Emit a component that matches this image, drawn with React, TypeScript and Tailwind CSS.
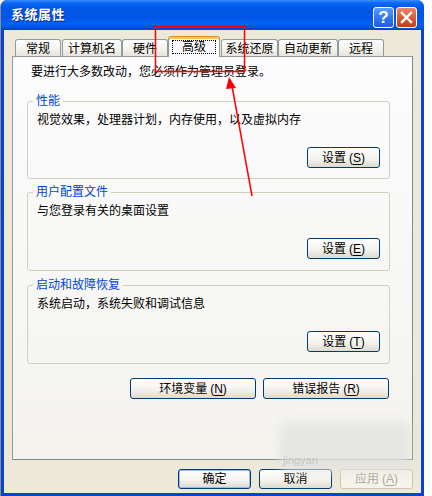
import React from "react";
import clsx from "clsx";

// Windows XP "系统属性" dialog, 高级 tab

const tabs = [
  { label: "常规", cls: "ml-[11px] w-[46px]" },
  { label: "计算机名", cls: "ml-[1px] w-[60px]" },
  { label: "硬件", cls: "ml-0 w-[46px]" },
  { label: "高级", cls: "ml-0 w-[52px]", active: true },
  { label: "系统还原", cls: "ml-[1px] w-[57px]" },
  { label: "自动更新", cls: "ml-0 w-[60px]" },
  { label: "远程", cls: "ml-0 w-[46px]" },
];

const Key = ({ k }: { k: string }) => (
  <span className="ml-[3px]">
    (<span className="underline underline-offset-[2px]">{k}</span>)
  </span>
);

function XpButton({
  label,
  k,
  className,
  primary,
  disabled,
}: {
  label: string;
  k?: string;
  className?: string;
  primary?: boolean;
  disabled?: boolean;
}) {
  return (
    <button
      className={clsx(
        "flex items-center justify-center rounded-[3px] border text-[12px] leading-none",
        disabled
          ? "border-[#c9c7ba] bg-[#f5f4ea] text-[#aca899]"
          : "border-[#003c74] bg-[linear-gradient(180deg,#ffffff_0%,#f4f3ee_55%,#dedbce_100%)] text-black",
        primary && "shadow-[inset_0_0_0_1px_#9fb8ee]",
        className
      )}
    >
      {label}
      {k && <Key k={k} />}
    </button>
  );
}

function Group({
  title,
  text,
  k,
  className,
}: {
  title: string;
  text: string;
  k: string;
  className: string;
}) {
  return (
    <fieldset
      className={clsx(
        "w-[363px] rounded-[3px] border border-[#d0d0bf] px-[9px]",
        className
      )}
    >
      <legend className="ml-[-4px] px-[3px] text-[12px] leading-[14px] text-[#0046d5]">
        {title}
      </legend>
      <p className="mt-[5px] text-[12px] leading-[14px]">{text}</p>
      <div className="mt-[20px] flex justify-end">
        <XpButton label="设置" k={k} className="h-[21px] w-[73px]" />
      </div>
    </fieldset>
  );
}

export default function App() {
  return (
    <div className="relative h-[496px] w-[432px] overflow-hidden bg-white font-['Liberation_Sans','Noto_Sans_CJK_SC',sans-serif] text-black">
      <div className="flex h-[496px] w-[424px] flex-col rounded-t-[7px] border-l border-l-[#8c8c8c] bg-[#0842d6]">
        {/* title bar */}
        <div className="flex h-[30px] shrink-0 items-start rounded-t-[7px] bg-[linear-gradient(180deg,#3a8cff_0%,#0a6af6_10%,#0058e6_25%,#0055e6_60%,#0462f5_80%,#0050d6_94%,#0040b0_100%)] pr-[7px]">
          <span className="ml-[10px] mt-[7px] text-[13px] font-bold leading-[16px] tracking-[0.5px] text-white [text-shadow:1px_1px_0_#0a2a8a]">
            系统属性
          </span>
          <div className="ml-auto mt-[7px] flex gap-[2px]">
            <div className="flex h-[21px] w-[21px] items-center justify-center rounded-[3px] border border-white bg-[linear-gradient(180deg,#5b9cff_0%,#2e6ff0_60%,#235fd8_100%)] text-[17px] font-bold leading-none text-white">
              ?
            </div>
            <div className="flex h-[21px] w-[21px] items-center justify-center rounded-[3px] border border-white bg-[linear-gradient(180deg,#e8866a_0%,#d65a36_55%,#c2401c_100%)]">
              <svg width="13" height="13" viewBox="0 0 13 13">
                <path d="M2 2 L11 11 M11 2 L2 11" stroke="white" strokeWidth="2.4" strokeLinecap="square" />
              </svg>
            </div>
          </div>
        </div>

        {/* client area */}
        <div className="mx-[3px] mb-[3px] flex flex-1 flex-col bg-[#ece9d8] pt-[6px]">
          <div className="flex h-[20px] items-end">
            {tabs.map((t) =>
              t.active ? (
                <div
                  key={t.label}
                  className={clsx(
                    "relative z-10 -mb-px h-[21px] rounded-t-[3px] border border-b-0 border-[#919b9c] border-t-[#e68b2c] bg-[#fcfcfe] px-[3px] pt-[3px] shadow-[inset_0_2px_0_#ffc83c]",
                    t.cls
                  )}
                >
                  <div className="flex h-[14px] items-center justify-center border border-dotted border-black text-[12px] leading-none">
                    {t.label}
                  </div>
                </div>
              ) : (
                <div
                  key={t.label}
                  className={clsx(
                    "flex h-[17px] items-center justify-center rounded-t-[3px] border border-b-0 border-[#919b9c] bg-[linear-gradient(180deg,#ffffff_0%,#f3f2ec_60%,#e6e4dc_100%)] pt-[2px] text-[12px] leading-none",
                    t.cls
                  )}
                >
                  {t.label}
                </div>
              )
            )}
          </div>

          <div className="mx-[8px] h-[404px] border border-[#919b9c] border-b-[#7f8a8b] border-r-[#7f8a8b] bg-[linear-gradient(180deg,#fcfcfe_0%,#f4f3ee_100%)] pl-[14px] pt-[8px]">
            <p className="ml-[4px] text-[12px] leading-[14px]">
              要进行大多数改动，您必须作为管理员登录。
            </p>
            <Group
              title="性能"
              text="视觉效果，处理器计划，内存使用，以及虚拟内存"
              k="S"
              className="mt-[15px] h-[85px]"
            />
            <Group
              title="用户配置文件"
              text="与您登录有关的桌面设置"
              k="E"
              className="mt-[6px] h-[86px]"
            />
            <Group
              title="启动和故障恢复"
              text="系统启动，系统失败和调试信息"
              k="T"
              className="mt-[7px] h-[86px]"
            />
            <div className="mt-[14px] flex w-[363px] justify-end gap-[7px] pr-[1px]">
              <XpButton label="环境变量" k="N" className="h-[21px] w-[126px]" />
              <XpButton label="错误报告" k="R" className="h-[21px] w-[126px]" />
            </div>
          </div>

          <div className="mr-[8px] mt-[9px] flex justify-end gap-[8px]">
            <XpButton label="确定" primary className="h-[20px] w-[73px]" />
            <XpButton label="取消" className="h-[20px] w-[73px]" />
            <XpButton label="应用" k="A" disabled className="h-[20px] w-[73px]" />
          </div>
        </div>
      </div>

      {/* blurred watermark */}
      <div className="pointer-events-none absolute left-[280px] top-[422px] h-[50px] w-[130px] rounded-[6px] bg-[#e2e2e0]/80 blur-[5px]" />
      <span className="pointer-events-none absolute left-[283px] top-[454px] text-[11px] leading-[13px] text-[#c4c4c4]">
        jingyan
      </span>

      {/* red annotation */}
      <svg className="pointer-events-none absolute left-0 top-0" width="432" height="496">
        <rect x="155.5" y="26.5" width="89" height="45" fill="none" stroke="#ff0000" strokeWidth="1.5" />
        <line x1="252" y1="196" x2="232" y2="86" stroke="#ff0000" strokeWidth="1.5" />
        <polygon points="229,77 236,88 226,89" fill="#ff0000" />
      </svg>
    </div>
  );
}
